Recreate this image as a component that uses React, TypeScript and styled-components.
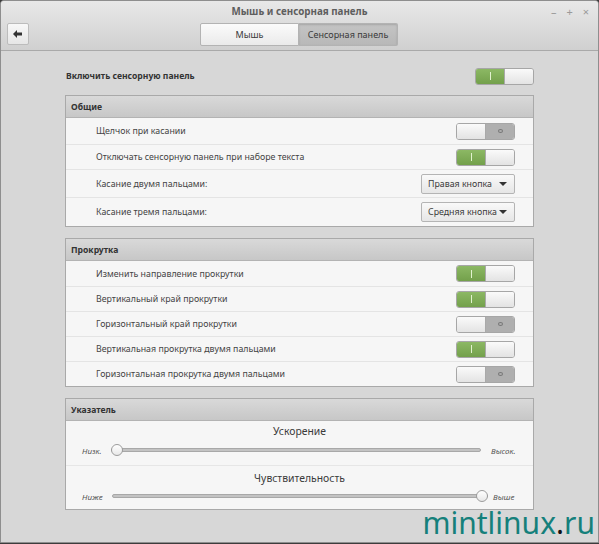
import React, { useState } from "react";
import styled, { createGlobalStyle } from "styled-components";

const GlobalStyle = createGlobalStyle`
  html, body { margin: 0; padding: 0; background: #3c3c3c; }
  body { font-family: "Noto Sans", "Open Sans", sans-serif; font-size: 8.8px; color: #3b3b3b; }
  * { box-sizing: border-box; }
`;

const Window = styled.div`
  position: relative;
  width: 599px;
  height: 543px;
  border: 1px solid #8e8e8e;
  border-radius: 4px 4px 0 0;
  background: #d7d7d7;
  overflow: hidden;
  display: flex;
  flex-direction: column;
`;

const HeaderBar = styled.header`
  height: 50px;
  border-bottom: 1px solid #a9a9a9;
  background: linear-gradient(#e8e8e8, #d0d0d0);
  display: flex;
  flex-direction: column;
`;

const TitleRow = styled.div`
  height: 21px;
  display: flex;
  align-items: center;
  justify-content: center;
  position: relative;
`;

const Title = styled.span`
  font-weight: bold;
  color: #5e5e5e;
  font-size: 9.8px;
`;

const Controls = styled.div`
  position: absolute;
  right: 9px;
  top: 3px;
  display: flex;
  gap: 10px;
  color: #9a9a9a;
  font-size: 11px;
`;

const ToolRow = styled.div`
  flex: 1;
  display: flex;
  align-items: flex-start;
  padding-top: 1px;
  padding-left: 6px;
`;

const BackButton = styled.button`
  width: 22px;
  height: 22px;
  padding: 0;
  border: 1px solid #bcbcbc;
  border-radius: 2px;
  background: linear-gradient(#f8f8f8, #e6e6e6);
  display: flex;
  align-items: center;
  justify-content: center;
`;

const Switcher = styled.div`
  display: flex;
  margin-left: 171px;
`;

const TabButton = styled.button<{ $active: boolean }>`
  width: 99px;
  height: 23px;
  padding: 0;
  white-space: nowrap;
  font-family: inherit;
  font-size: 9px;
  color: #3a3a3a;
  border: 1px solid #b3b3b3;
  border-radius: ${(p) => (p.$active ? "0 2px 2px 0" : "2px 0 0 2px")};
  background: ${(p) =>
    p.$active ? "linear-gradient(#c4c4c4, #b8b8b8)" : "linear-gradient(#fbfbfb, #eaeaea)"};
  box-shadow: ${(p) => (p.$active ? "inset 0 1px 2px rgba(0,0,0,0.15)" : "none")};
  & + & { border-left: none; }
`;

const Content = styled.main`
  flex: 1;
  padding: 16px 64px 0 64px;
  display: flex;
  flex-direction: column;
`;

const EnableRow = styled.div`
  height: 18px;
  display: flex;
  align-items: center;
  justify-content: space-between;
  padding-left: 1px;
  margin-bottom: 10px;
`;

const BoldLabel = styled.span`
  font-weight: bold;
  font-size: 8.6px;
  color: #333;
`;

const Section = styled.section`
  border: 1px solid #a9a9a9;
  background: #f6f6f6;
  margin-bottom: 11px;
`;

const SectionHeader = styled.div`
  height: 22px;
  display: flex;
  align-items: center;
  padding-left: 5px;
  font-weight: bold;
  font-size: 8.6px;
  color: #333;
  background: linear-gradient(#d9d9d9, #c7c7c7);
  border-bottom: 1px solid #b3b3b3;
`;

const Row = styled.div<{ $h: number }>`
  height: ${(p) => p.$h}px;
  display: flex;
  align-items: center;
  justify-content: space-between;
  padding: 0 18px 0 30px;
  color: #444;
  & + & { border-top: 1px solid #e4e4e4; }
`;

const SwitchBox = styled.div`
  width: 59px;
  height: 17px;
  border: 1px solid #a6a6a6;
  border-radius: 3px;
  display: flex;
  overflow: hidden;
`;

const Half = styled.div<{ $kind: "on" | "off" | "knob" }>`
  flex: 1;
  display: flex;
  align-items: center;
  justify-content: center;
  background: ${(p) =>
    p.$kind === "on"
      ? "linear-gradient(#8cb864, #73a04b)"
      : p.$kind === "off"
      ? "#afafaf"
      : "linear-gradient(#fafafa, #e3e3e3)"};
  & + & { border-left: 1px solid #a9a9a9; }
`;

const OnMark = styled.span`
  width: 1px;
  height: 8px;
  background: #e2f2cf;
`;

const OffMark = styled.span`
  width: 5px;
  height: 4px;
  border: 1px solid #777;
  border-radius: 50%;
`;

const Toggle = ({ on }: { on: boolean }) => (
  <SwitchBox>
    {on ? (
      <>
        <Half $kind="on"><OnMark /></Half>
        <Half $kind="knob" />
      </>
    ) : (
      <>
        <Half $kind="knob" />
        <Half $kind="off"><OffMark /></Half>
      </>
    )}
  </SwitchBox>
);

const Combo = styled.button`
  width: 94px;
  height: 20px;
  padding: 0 7px 0 6px;
  white-space: nowrap;
  border: 1px solid #b4b4b4;
  border-radius: 2px;
  background: linear-gradient(#f9f9f9, #e6e6e6);
  font-family: inherit;
  font-size: 8.8px;
  color: #3a3a3a;
  display: flex;
  align-items: center;
  justify-content: space-between;
`;

const Arrow = styled.span`
  width: 0;
  height: 0;
  border-left: 4px solid transparent;
  border-right: 4px solid transparent;
  border-top: 4px solid #333;
`;

const SliderBlock = styled.div`
  height: 44px;
  display: flex;
  flex-direction: column;
  & + & { border-top: 1px solid #e6e6e6; }
`;

const SliderTitle = styled.div<{ $top: number; $h: number }>`
  text-align: center;
  color: #3a3a3a;
  font-size: 10.4px;
  line-height: 14px;
  padding-top: ${(p) => p.$top}px;
  height: ${(p) => p.$h}px;
`;

const SliderLine = styled.div<{ $right: number }>`
  display: flex;
  align-items: center;
  height: 16px;
  padding: 0 ${(p) => p.$right}px 0 16px;
`;

const Side = styled.span<{ $w: number }>`
  width: ${(p) => p.$w}px;
  font-style: italic;
  font-size: 8px;
  color: #555;
  white-space: nowrap;
`;

const Track = styled.div<{ $ml: number; $mr: number }>`
  flex: 1;
  height: 4px;
  margin: 0 ${(p) => p.$mr}px 0 ${(p) => p.$ml}px;
  border: 1px solid #a8a8a8;
  border-radius: 3px;
  background: #c3c3c3;
  position: relative;
`;

const Knob = styled.div<{ $at: "start" | "end" }>`
  position: absolute;
  top: -5px;
  ${(p) => (p.$at === "start" ? "left: -1px;" : "right: -1px;")}
  width: 12px;
  height: 12px;
  border: 1px solid #9c9c9c;
  border-radius: 50%;
  background: linear-gradient(#ffffff, #e8e8e8);
`;

const Watermark = styled.div`
  position: absolute;
  right: 3px;
  bottom: 4px;
  font-family: "Noto Sans", "Open Sans", sans-serif;
  font-size: 30px;
  color: #15807b;
  line-height: 1;
  & b { color: #111; font-weight: normal; }
`;

const scrollRows = [
  { label: "Изменить направление прокрутки", on: true },
  { label: "Вертикальный край прокрутки", on: true },
  { label: "Горизонтальный край прокрутки", on: false },
  { label: "Вертикальная прокрутка двумя пальцами", on: true },
  { label: "Горизонтальная прокрутка двумя пальцами", on: false },
];

export default function App() {
  const [tab, setTab] = useState("touch");
  return (
    <>
      <GlobalStyle />
      <Window>
        <HeaderBar>
          <TitleRow>
            <Title>Мышь и сенсорная панель</Title>
            <Controls>
              <span>–</span>
              <span>+</span>
              <span>×</span>
            </Controls>
          </TitleRow>
          <ToolRow>
            <BackButton>
              <svg width="10" height="8" viewBox="0 0 10 8">
                <path d="M0 4 L4 0 L4 2.5 L9 2.5 L9 5.5 L4 5.5 L4 8 Z" fill="#333" />
              </svg>
            </BackButton>
            <Switcher>
              <TabButton $active={tab === "mouse"} onClick={() => setTab("mouse")}>
                Мышь
              </TabButton>
              <TabButton $active={tab === "touch"} onClick={() => setTab("touch")}>
                Сенсорная панель
              </TabButton>
            </Switcher>
          </ToolRow>
        </HeaderBar>
        <Content>
          <EnableRow>
            <BoldLabel>Включить сенсорную панель</BoldLabel>
            <Toggle on />
          </EnableRow>
          <Section>
            <SectionHeader>Общие</SectionHeader>
            <Row $h={26}>
              <span>Щелчок при касании</span>
              <Toggle on={false} />
            </Row>
            <Row $h={25}>
              <span>Отключать сенсорную панель при наборе текста</span>
              <Toggle on />
            </Row>
            <Row $h={28}>
              <span>Касание двумя пальцами:</span>
              <Combo>
                Правая кнопка <Arrow />
              </Combo>
            </Row>
            <Row $h={29}>
              <span>Касание тремя пальцами:</span>
              <Combo>
                Средняя кнопка <Arrow />
              </Combo>
            </Row>
          </Section>
          <Section>
            <SectionHeader>Прокрутка</SectionHeader>
            {scrollRows.map((r) => (
              <Row $h={25} key={r.label}>
                <span>{r.label}</span>
                <Toggle on={r.on} />
              </Row>
            ))}
          </Section>
          <Section>
            <SectionHeader>Указатель</SectionHeader>
            <SliderBlock>
              <SliderTitle $top={3} $h={21}>Ускорение</SliderTitle>
              <SliderLine $right={18}>
                <Side $w={24}>Низк.</Side>
                <Track $ml={5} $mr={10}>
                  <Knob $at="start" />
                </Track>
                <Side $w={24}>Высок.</Side>
              </SliderLine>
            </SliderBlock>
            <SliderBlock>
              <SliderTitle $top={5} $h={22}>Чувствительность</SliderTitle>
              <SliderLine $right={19}>
                <Side $w={25}>Ниже</Side>
                <Track $ml={5} $mr={5}>
                  <Knob $at="end" />
                </Track>
                <Side $w={21}>Выше</Side>
              </SliderLine>
            </SliderBlock>
          </Section>
        </Content>
        <Watermark>
          mintlinux<b>.</b>ru
        </Watermark>
      </Window>
    </>
  );
}
